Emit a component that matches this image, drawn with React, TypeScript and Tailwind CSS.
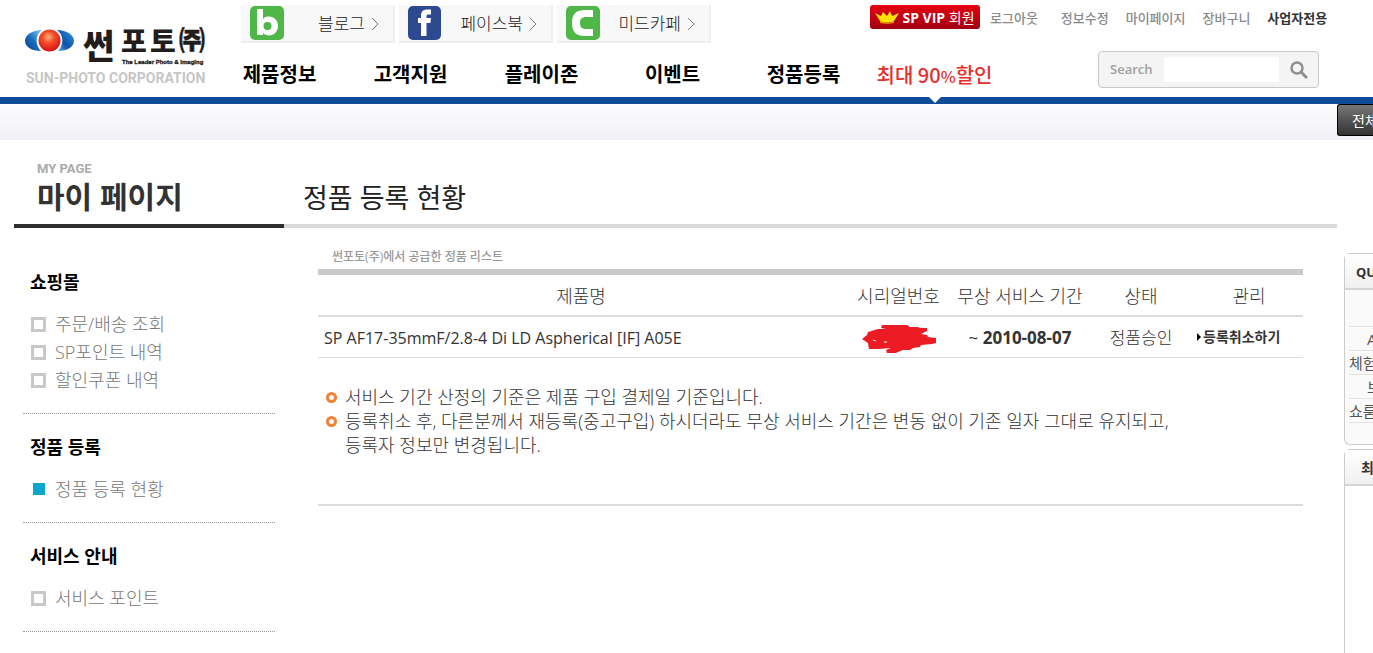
import type { ReactNode } from 'react';

const socialLinks = [
  { label: '블로그', kind: 'blog' },
  { label: '페이스북', kind: 'facebook' },
  { label: '미드카페', kind: 'cafe' },
];

const mainMenu = ['제품정보', '고객지원', '플레이존', '이벤트', '정품등록'];

const userMenu = ['로그아웃', '정보수정', '마이페이지', '장바구니'];

const sideMenu = [
  {
    title: '쇼핑몰',
    items: [
      { label: '주문/배송 조회', active: false },
      { label: 'SP포인트 내역', active: false },
      { label: '할인쿠폰 내역', active: false },
    ],
  },
  { title: '정품 등록', items: [{ label: '정품 등록 현황', active: true }] },
  { title: '서비스 안내', items: [{ label: '서비스 포인트', active: false }] },
];

const quickItems = ['A', '체험', '브', '쇼룸'];

function Logo() {
  return (
    <svg viewBox="0 0 184 62" className="h-[62px] w-[184px] overflow-visible" role="img" aria-label="썬포토(주)">
      <defs>
        <radialGradient id="sun" cx="45%" cy="35%" r="65%">
          <stop offset="0" stopColor="#ffb27a" />
          <stop offset="0.4" stopColor="#f4502a" />
          <stop offset="1" stopColor="#dd0f12" />
        </radialGradient>
        <linearGradient id="wingLeft" x1="0" x2="1" y1="1" y2="0">
          <stop offset="0" stopColor="#0b3c8c" />
          <stop offset="0.5" stopColor="#1a6fc0" />
          <stop offset="1" stopColor="#8fd0f0" />
        </linearGradient>
        <linearGradient id="wingRight" x1="1" x2="0" y1="0" y2="1">
          <stop offset="0" stopColor="#2f9be0" />
          <stop offset="0.6" stopColor="#0d4fa8" />
          <stop offset="1" stopColor="#5fb2e6" />
        </linearGradient>
      </defs>
      <path d="M17 4C7 4 0 9 0 15s7 10 16 10c-5-5-7-15 1-21z" fill="url(#wingLeft)" />
      <path d="M32 4c10 0 17 5 17 11s-7 10-16 10c5-5 7-15-1-21z" fill="url(#wingRight)" />
      <circle cx="24.500" cy="14.500" r="11" fill="url(#sun)" />
      <g className="font-['Noto_Sans_CJK_KR',sans-serif] font-black" fill="#221c1a">
        <text x="58" y="33" fontSize="34">썬</text>
        <text x="96" y="26" fontSize="28">포</text>
        <text x="125" y="26" fontSize="28">토</text>
        <text x="154" y="24" fontSize="26" stroke="#221c1a" strokeWidth="0.500">㈜</text>
      </g>
      <text x="97" y="38" fontSize="6" fill="#221c1a" stroke="#221c1a" strokeWidth="0.300" className="font-['Liberation_Sans',sans-serif] font-bold">
        The Leader Photo &amp; Imaging
      </text>
      <text x="1" y="57" fontSize="14" fill="#c6c6c6" className="font-['Roboto',sans-serif] font-bold">
        SUN-PHOTO CORPORATION
      </text>
    </svg>
  );
}

function SocialIcon({ kind }: { kind: string }) {
  if (kind === 'facebook') {
    return (
      <svg viewBox="0 0 34 34" className="size-[34px]" aria-hidden="true">
        <rect width="33" height="34" rx="5" fill="#2d4a90" />
        <path d="M13 30V17h-3v-5h3V10c0-4.500 2-6.500 6.500-6.500H23V8.500h-2.500c-1.500 0-2 .5-2 2V12h4.500l-.6 5h-3.900v13z" fill="#fff" />
      </svg>
    );
  }
  return (
    <svg viewBox="0 0 34 34" className="size-[34px]" aria-hidden="true">
      <rect width="34" height="34" rx="5" fill="#4eb748" />
      {kind === 'blog' ? (
        <path
          d="M7 3h6v10c1.500-2 3.500-2.500 6-2.500 5 0 9 4 9 9.500s-4 9.500-9 9.500c-2.500 0-4.500-1-6-2.500v2H7zM17.500 16a4 4 0 1 0 0 8 4 4 0 0 0 0-8z"
          fillRule="evenodd"
          fill="#fff"
        />
      ) : (
        <path d="M27 4v7h-6c-5 0-7 1.500-7 6s2 6 7 6h6v7h-8C10 30 6 26 6 17S10 4 19 4z" fill="#fff" />
      )}
    </svg>
  );
}

function Header() {
  return (
    <header className="flex h-[97px]">
      <a href="#" className="w-[214px] shrink-0 pl-[25px] pt-[26px]">
        <Logo />
      </a>
      <div className="flex-1">
        <div className="flex h-[46px] items-start pl-[27px] pt-[5px]">
          <div className="flex gap-1">
            {socialLinks.map((link) => (
              <a
                key={link.kind}
                href="#"
                className="flex h-[38px] w-[154px] items-center justify-between border-b-2 border-r-2 border-[#efefef] bg-[#f8f8f8] pl-[9px] pr-[14px]"
              >
                <SocialIcon kind={link.kind} />
                <span className="flex items-center gap-[6px] pt-[2px] text-[17px] font-light text-[#222]">
                  {link.label}
                  <svg viewBox="0 0 8 14" className="h-[14px] w-2" aria-hidden="true">
                    <path d="M1 1l6 6-6 6" fill="none" stroke="#777" />
                  </svg>
                </span>
              </a>
            ))}
          </div>
          <a
            href="#"
            className="ml-[159px] flex h-6 w-[110px] items-center justify-center gap-[3px] rounded-[3px] bg-linear-to-b from-[#e60012] to-[#a00010] text-[14px] text-white"
          >
            <svg viewBox="0 0 24 13" className="h-[13px] w-6" aria-hidden="true">
              <path d="M0 2l6 3 2-4 4 4 3-5 2 5 7-3-5 8c-4 2-10 2-14 0z" fill="#ffe100" />
              <path d="M5 10c4 2 10 2 14 0v2c-4 1-10 1-14 0z" fill="#f39800" />
            </svg>
            <span>
              <b>SP VIP</b> 회원
            </span>
          </a>
          <nav className="ml-[10px] flex items-center pt-[3px] text-[13px] font-medium leading-5 text-[#8a8a8a]">
            <ul className="flex gap-[17px]">
              {userMenu.map((label) => (
                <li key={label} className="first:mr-[6px]">
                  <a href="#">{label}</a>
                </li>
              ))}
              <li>
                <a href="#" className="font-bold text-[#333]">사업자전용</a>
              </li>
            </ul>
          </nav>
        </div>
        <div className="flex h-[51px]">
          <nav className="text-[20px] font-bold text-black">
            <ul className="grid grid-cols-[repeat(6,131px)] text-center leading-[57px]">
              {mainMenu.map((label) => (
                <li key={label}>
                  <a href="#">{label}</a>
                </li>
              ))}
              <li className="relative">
                <a href="#" className="font-['Noto_Sans_CJK_KR',sans-serif] font-medium text-[#e62e2b]">
                  최대 90<span className="text-[16px]">%</span>할인
                </a>
                <svg viewBox="0 0 12 6" className="absolute left-[60px] top-[51px] h-[6px] w-3" aria-hidden="true">
                  <path d="M0 0h12L6 6z" fill="#fff" />
                </svg>
              </li>
            </ul>
          </nav>
          <form className="ml-[98px] mt-[5px] flex h-[37px] w-[221px] items-center rounded-[4px] border border-[#c8c8c8] bg-[#f4f4f4] pl-[11px]">
            <label htmlFor="search" className="w-[54px] text-[13px] font-semibold text-[#a0a0a0]">
              Search
            </label>
            <input id="search" type="text" className="h-[25px] w-[115px] bg-white text-[13px] outline-none" />
            <button type="button" aria-label="검색" className="flex flex-1 justify-center">
              <svg viewBox="0 0 18 18" className="size-[18px]" fill="none" stroke="#8f8f8f" aria-hidden="true">
                <circle cx="7" cy="7" r="5.500" strokeWidth="2.500" />
                <path d="M11 11l6 6" strokeWidth="3" />
              </svg>
            </button>
          </form>
        </div>
      </div>
    </header>
  );
}

function SideMenu() {
  return (
    <nav className="ml-[9px] mt-[21px] w-[252px]">
      {sideMenu.map((section) => (
        <section key={section.title} className="border-b border-dotted border-[#999] pb-[19px] pl-[7px] pt-5">
          <h3 className="mb-[15px] text-[18px] font-bold leading-[26px] text-black">{section.title}</h3>
          <ul>
            {section.items.map((item) => (
              <li key={item.label}>
                <a href="#" className="flex h-7 items-center text-[18px] font-light leading-7 text-[#777]">
                  <span className="flex w-[25px] pl-[1px]">
                    {item.active ? (
                      <i className="ml-[2px] size-3 bg-[#0aa6cc]" />
                    ) : (
                      <i className="size-[15px] border-[3px] border-[#c8c8c8]" />
                    )}
                  </span>
                  {item.label}
                </a>
              </li>
            ))}
          </ul>
        </section>
      ))}
    </nav>
  );
}

function ProductTable() {
  return (
    <table className="w-full table-fixed border-t-[6px] border-[#cacaca] text-center text-[17px] text-[#333]">
      <thead>
        <tr className="h-[44px] border-b-2 border-[#dcdcdc] text-[18px]">
          <th scope="col" className="pt-[3px] font-light">제품명</th>
          <th scope="col" className="w-[109px] pt-[3px] font-light">시리얼번호</th>
          <th scope="col" className="w-[134px] pt-[3px] font-light">무상 서비스 기간</th>
          <th scope="col" className="w-[108px] pt-[3px] font-light">상태</th>
          <th scope="col" className="w-[108px] pt-[3px] font-light">관리</th>
        </tr>
      </thead>
      <tbody>
        <tr className="h-[41px] border-b border-[#dcdcdc]">
          <td className="pl-[6px] pt-[2px] text-left text-[16px]">SP AF17-35mmF/2.8-4 Di LD Aspherical [IF] A05E</td>
          <td className="pt-[5px]">
            <svg viewBox="0 0 76 30" className="mx-auto h-[30px] w-[76px]" role="img" aria-label="비공개">
              <path
                d="M21 1h25l3 2h8l2 1h7v3l-6 3 6 1 1 2 8 1v5l-4 1-11 1-1 2-7 1-3 2h-7l-5 2-2 1h-9l-1-3 5-2-12 1H8l-1-6-6-4 5-4 1-3 10-3h8l-5-1z"
                fill="#ed1c24"
              />
              <path d="M12 16l3 1M23 18h3" stroke="#fff" />
            </svg>
          </td>
          <td className="pt-[2px]">~ <b>2010-08-07</b></td>
          <td className="pt-[2px] font-light">정품승인</td>
          <td className="pl-[2px] text-left">
            <button type="button" className="flex items-center gap-[2px] text-[14px] font-bold">
              <svg viewBox="0 0 4 8" className="h-2 w-1" aria-hidden="true">
                <path d="M0 0l4 4-4 4z" fill="#000" />
              </svg>
              등록취소하기
            </button>
          </td>
        </tr>
      </tbody>
    </table>
  );
}

function Note({ children }: { children: ReactNode }) {
  return (
    <li className="flex">
      <i className="ml-2 mr-2 mt-[7px] size-[11px] shrink-0 rounded-full border-[3px] border-[#f08135]" />
      <span>{children}</span>
    </li>
  );
}

function QuickRail() {
  return (
    <aside className="flex w-[29px] shrink-0 flex-col gap-1 overflow-hidden whitespace-nowrap pt-[113px]">
      <section className="h-[192px] rounded-l-[6px] border border-r-0 border-[#ccc] bg-[#fafafa]">
        <h4 className="h-9 border-b-2 border-[#d4d4d4] bg-linear-to-b from-white to-[#f0f0f0] pl-[11px] text-[13px] font-bold leading-9 text-[#333]">
          QU
        </h4>
        <ul className="ml-1 mt-9 text-[15px] text-[#555]">
          {quickItems.map((label) => (
            <li key={label} className="h-[24px] border-t border-[#e2e2e2] leading-[24px]">
              <a href="#" className={label.length === 1 ? 'pl-[18px]' : ''}>{label}</a>
            </li>
          ))}
          <li className="border-t border-[#e2e2e2]" />
        </ul>
      </section>
      <section className="flex-1 rounded-tl-[6px] border-l border-t border-[#ccc]">
        <h4 className="h-9 border-b-2 border-[#d4d4d4] bg-linear-to-b from-white to-[#f0f0f0] pl-4 text-[14px] font-bold leading-9 text-[#333]">
          최
        </h4>
      </section>
    </aside>
  );
}

export default function App() {
  return (
    <div className="flex min-h-screen flex-col overflow-hidden bg-white font-['Open_Sans','Noto_Sans_CJK_KR',sans-serif]">
      <Header />
      <div className="flex h-[43px] justify-end border-t-[7px] border-[#0e4c99] bg-linear-to-b from-[#fcfcfe] to-[#f0f1f5]">
        <button
          type="button"
          className="h-8 w-9 overflow-hidden whitespace-nowrap rounded-l-[3px] border border-r-0 border-black bg-linear-to-b from-[#777] to-[#333] pl-[14px] text-left text-[14px] text-white"
        >
          전체
        </button>
      </div>
      <div className="flex flex-1">
        <div className="mr-[7px] flex flex-1 flex-col pl-[14px]">
          <div className="flex h-[88px]">
            <div className="w-[270px] border-b-4 border-[#2e2e2e] pl-[23px] pt-[21px]">
              <p className="font-['Roboto',sans-serif] text-[13px] font-bold leading-4 text-[#aaa]">MY PAGE</p>
              <h1 className="text-[30px] font-bold leading-[40px] text-[#333]">마이 페이지</h1>
            </div>
            <h2 className="flex-1 border-b-4 border-[#d9d9d9] pl-[19px] pt-[36px] text-[27px] leading-[44px] text-[#222]">
              정품 등록 현황
            </h2>
          </div>
          <div className="flex">
            <div className="w-[270px] shrink-0">
              <SideMenu />
            </div>
            <main className="flex-1 pl-[34px] pr-[34px] pt-5">
              <p className="h-[21px] pl-[14px] text-[12px] font-medium leading-[18px] text-[#999]">
                썬포토(주)에서 공급한 정품 리스트
              </p>
              <ProductTable />
              <ul className="mt-[27px] border-b-2 border-[#dcdcdc] pb-[47px] text-[18px] font-light leading-6 text-[#333]">
                <Note>서비스 기간 산정의 기준은 제품 구입 결제일 기준입니다.</Note>
                <Note>
                  등록취소 후, 다른분께서 재등록(중고구입) 하시더라도 무상 서비스 기간은 변동 없이 기존 일자 그대로 유지되고,
                  <br />
                  등록자 정보만 변경됩니다.
                </Note>
              </ul>
            </main>
          </div>
        </div>
        <QuickRail />
      </div>
    </div>
  );
}
